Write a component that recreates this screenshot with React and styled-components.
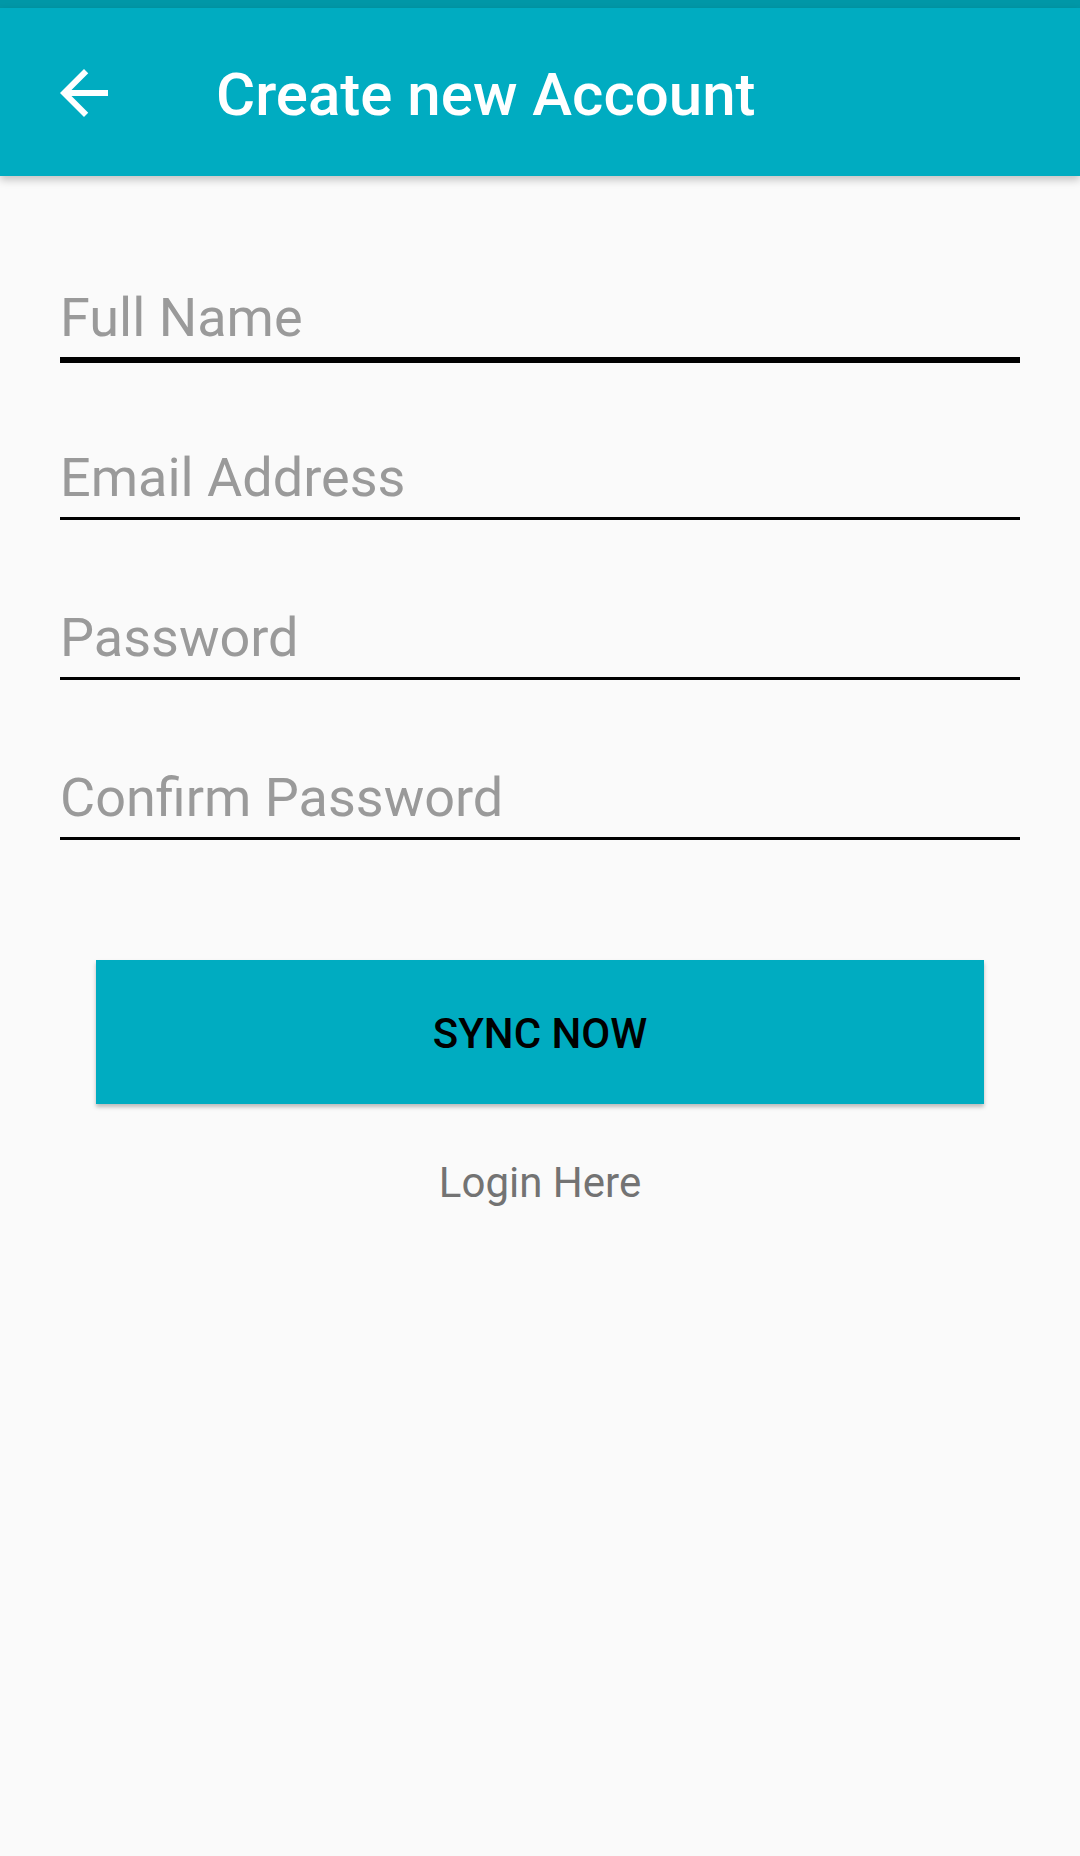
import React from 'react'
import styled, { createGlobalStyle } from 'styled-components';

const GlobalStyle = createGlobalStyle`
  html, body {
    margin: 0;
    padding: 0;
    background: #fafafa;
  }
  body {
    font-family: Roboto, "Liberation Sans", sans-serif;
  }
`;

const Screen = styled.div`
  width: 1080px;
  min-height: 1856px;
  background: #fafafa;
  display: flex;
  flex-direction: column;
`;

const StatusBar = styled.div`
  height: 8px;
  background: #0097a7;
`;

const AppBar = styled.header`
  height: 168px;
  background: #00acc1;
  display: flex;
  align-items: center;
  box-shadow: 0 4px 8px rgba(0, 0, 0, 0.22);
  position: relative;
  z-index: 1;
`;

const BackButton = styled.button`
  width: 72px;
  height: 72px;
  margin-left: 48px;
  padding: 0;
  border: none;
  background: transparent;
  display: flex;
  align-items: center;
  justify-content: center;
  margin-top: 2px;
`;

const Title = styled.h1`
  margin: 0 0 0 96px;
  padding-top: 5px;
  font-size: 60px;
  line-height: 70px;
  font-weight: 500;
  color: #fff;
`;

const Form = styled.main`
  display: flex;
  flex-direction: column;
  padding: 110px 60px 0;
`;

const Field = styled.div`
  position: relative;
  height: 71px;
  border-bottom: 3px solid #000;
  margin-bottom: 86px;
  &:last-of-type {
    margin-bottom: 0;
  }
  ${p => p.focused && `
    &::after {
      content: '';
      position: absolute;
      left: 0;
      right: 0;
      bottom: -6px;
      height: 3px;
      background: #000;
    }
  `}
`;

const Input = styled.input`
  width: 100%;
  height: 64px;
  padding: 0;
  border: none;
  outline: none;
  background: transparent;
  font-family: Roboto, "Liberation Sans", sans-serif;
  font-size: 54px;
  line-height: 64px;
  color: #212121;
  caret-color: transparent;
  &::placeholder {
    color: #9a9a9a;
  }
`;

const Actions = styled.div`
  display: flex;
  flex-direction: column;
  align-items: center;
  padding: 120px 96px 0;
`;

const SyncButton = styled.button`
  width: 100%;
  height: 144px;
  border: none;
  background: #00acc1;
  box-shadow: 0 3px 4px rgba(0, 0, 0, 0.25);
  font-family: Roboto, "Liberation Sans", sans-serif;
  font-size: 42px;
  line-height: 50px;
  font-weight: 500;
  color: #000;
  padding: 4px 0 0;
`;

const LoginLink = styled.a`
  margin-top: 54px;
  font-size: 42px;
  line-height: 50px;
  color: #737373;
  text-decoration: none;
`;

const fields = [
  { hint: 'Full Name', type: 'text', focused: true },
  { hint: 'Email Address', type: 'email' },
  { hint: 'Password', type: 'password' },
  { hint: 'Confirm Password', type: 'password' },
];

const App = () => {
  return (
    <>
      <GlobalStyle />
      <Screen>
        <StatusBar />
        <AppBar>
          <BackButton aria-label="Back">
            <svg width="72" height="72" viewBox="0 0 24 24" fill="#fff">
              <path d="M20 11H7.83l5.59-5.59L12 4l-8 8 8 8 1.41-1.41L7.83 13H20v-2z" />
            </svg>
          </BackButton>
          <Title>Create new Account</Title>
        </AppBar>

        <Form>
          {fields.map(f => (
            <Field key={f.hint} focused={f.focused}>
              <Input type={f.type} placeholder={f.hint} />
            </Field>
          ))}
        </Form>

        <Actions>
          <SyncButton>SYNC NOW</SyncButton>
          <LoginLink href="#">Login Here</LoginLink>
        </Actions>
      </Screen>
    </>
  )
}

export default App
